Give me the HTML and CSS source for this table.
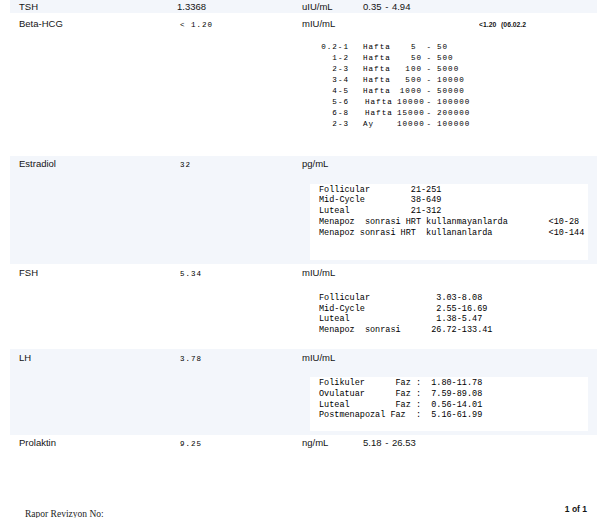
FILE: index.html
```html
<!DOCTYPE html>
<html lang="tr">
<head>
<meta charset="utf-8">
<title>Rapor</title>
<link rel="stylesheet" href="styles.css">
</head>
<body>
<div class="page">
  <div class="row tint row-first">
    <div class="c-name">TSH</div>
    <div class="c-val">1.3368</div>
    <div class="c-unit">uIU/mL</div>
    <div class="c-range">0.35 - 4.94</div>
  </div>

  <div class="row row-hcg">
    <div class="c-name">Beta-HCG</div>
    <div class="c-val mono-val">&lt; 1.20</div>
    <div class="c-unit">mIU/mL</div>
    <div class="c-prev">&lt;1.20 (06.02.2</div>
    <div class="ref ref-tall ref-hafta">
      <div class="hafta">
        <span class="h-a">0.2-1</span><span class="h-b">Hafta</span><span class="h-c h-c-one">5</span><span class="h-d">-</span><span class="h-e">50</span>
        <span class="h-a">1-2</span><span class="h-b">Hafta</span><span class="h-c">50</span><span class="h-d">-</span><span class="h-e">500</span>
        <span class="h-a">2-3</span><span class="h-b">Hafta</span><span class="h-c">100</span><span class="h-d">-</span><span class="h-e">5000</span>
        <span class="h-a">3-4</span><span class="h-b">Hafta</span><span class="h-c">500</span><span class="h-d">-</span><span class="h-e">10000</span>
        <span class="h-a">4-5</span><span class="h-b">Hafta</span><span class="h-c">1000</span><span class="h-d">-</span><span class="h-e">50000</span>
        <span class="h-a">5-6</span><span class="h-b h-b-shift">Hafta</span><span class="h-c">10000</span><span class="h-d">-</span><span class="h-e">100000</span>
        <span class="h-a">6-8</span><span class="h-b h-b-shift">Hafta</span><span class="h-c">15000</span><span class="h-d">-</span><span class="h-e">200000</span>
        <span class="h-a">2-3</span><span class="h-b">Ay</span><span class="h-c">10000</span><span class="h-d">-</span><span class="h-e">100000</span>
      </div>
    </div>
  </div>

  <div class="row tint">
    <div class="c-name">Estradiol</div>
    <div class="c-val mono-val">32</div>
    <div class="c-unit">pg/mL</div>
    <div class="ref ref-tall">Follicular        21-251
Mid-Cycle         38-649
Luteal            21-312
Menapoz  sonrasi HRT kullanmayanlarda        &lt;10-28
Menapoz sonrasi HRT  kullananlarda           &lt;10-144</div>
  </div>

  <div class="row">
    <div class="c-name">FSH</div>
    <div class="c-val mono-val">5.34</div>
    <div class="c-unit">mIU/mL</div>
    <div class="ref">Follicular             3.03-8.08
Mid-Cycle              2.55-16.69
Luteal                 1.38-5.47
Menapoz  sonrasi      26.72-133.41</div>
  </div>

  <div class="row tint">
    <div class="c-name">LH</div>
    <div class="c-val mono-val">3.78</div>
    <div class="c-unit">mIU/mL</div>
    <div class="ref">Folikuler      Faz :  1.80-11.78
Ovulatuar      Faz :  7.59-89.08
Luteal         Faz :  0.56-14.01
Postmenapozal Faz  :  5.16-61.99</div>
  </div>

  <div class="row">
    <div class="c-name">Prolaktin</div>
    <div class="c-val mono-val">9.25</div>
    <div class="c-unit">ng/mL</div>
    <div class="c-range">5.18 - 26.53</div>
  </div>

  <div class="footer">
    <div class="rev">Rapor Revizyon No:</div>
    <div class="pageno">1 of 1</div>
  </div>
</div>
</body>
</html>
```

FILE: styles.css
```css
html, body {
  margin: 0;
  padding: 0;
  background: #ffffff;
}

body {
  font-family: "Liberation Sans", Arial, sans-serif;
  color: #141414;
}

.page {
  box-sizing: border-box;
  width: 604px;
  height: 518px;
  overflow: hidden;
  padding: 0 7px 0 10px;
}

.row {
  display: grid;
  grid-template-columns: 158px 125px 61px 116px 1fr;
  align-items: baseline;
  padding: 2.5px 0 4px 9px;
  font-size: 9.5px;
  line-height: 12px;
}

.tint {
  background: #f3f6fb;
}

.row-first {
  padding-top: 1px;
  padding-bottom: 0;
}

.row-hcg {
  padding-top: 5px;
}

.c-name { grid-column: 1; }
.c-val { grid-column: 2; }
.c-unit { grid-column: 3; }
.c-range {
  grid-column: 4;
  word-spacing: 1px;
  white-space: nowrap;
}

.mono-val {
  font-family: "Liberation Mono", "Courier New", monospace;
  font-size: 7.5px;
  line-height: 10px;
  letter-spacing: 1px;
  padding-left: 3px;
  color: #000000;
}

.c-prev {
  grid-column: 5;
  font-weight: bold;
  font-size: 6.8px;
  line-height: 10px;
  word-spacing: 3px;
  white-space: nowrap;
  overflow: hidden;
}

.ref {
  grid-column: 3 / -1;
  margin: 13.5px 9px 0 8px;
  padding: 0.6px 0 9.5px 9px;
  background: #ffffff;
  font-family: "Liberation Mono", "Courier New", monospace;
  font-size: 8.5px;
  line-height: 10.8px;
  white-space: pre;
  color: #000000;
}

.ref-tall {
  padding-bottom: 21.6px;
}

.ref-hafta {
  margin-top: 12px;
  padding-top: 0.4px;
  font-size: 7.6px;
  line-height: 11px;
  letter-spacing: 1px;
  white-space: nowrap;
}

.hafta {
  display: grid;
  grid-template-columns: 30px 48px 25px 15px auto;
}

.h-a { text-align: right; }
.h-b { padding-left: 14px; }
.h-b-shift { padding-left: 16px; }
.h-c { text-align: right; }
.h-c-one { padding-right: 5.5px; }
.h-d { padding-left: 4.5px; }

.footer {
  display: flex;
  justify-content: space-between;
  align-items: flex-start;
  margin-top: 51px;
  padding: 0 10px 0 15px;
}

.rev {
  font-family: "Liberation Serif", "Times New Roman", serif;
  font-size: 9.5px;
  line-height: 11px;
  margin-top: 4.3px;
  color: #1e1e1e;
}

.pageno {
  font-weight: bold;
  font-size: 8.5px;
  line-height: 10px;
}
```
